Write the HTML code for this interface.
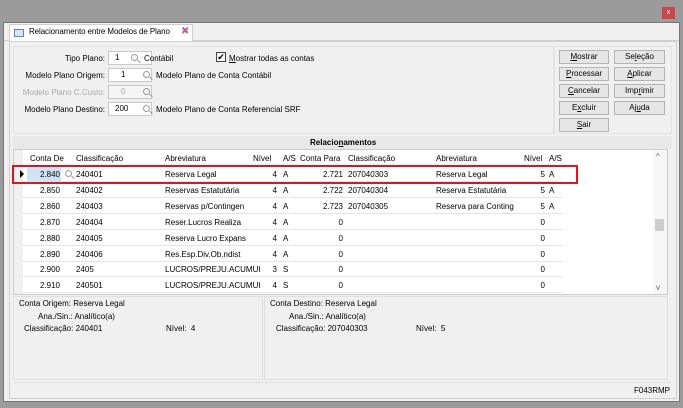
<!DOCTYPE html>
<html><head><meta charset="utf-8"><style>
*{box-sizing:border-box;margin:0;padding:0}
body{width:683px;height:408px;background:#9b9b9b;font-family:"Liberation Sans",sans-serif;font-size:8px;color:#000;position:relative;overflow:hidden}
.a{position:absolute;white-space:nowrap}
.r{text-align:right}
.inp{position:absolute;height:14px;background:#fff;border:1px solid #c8c8c8;font-size:8px;line-height:12px;padding-left:6px}
.mag{position:absolute;width:7px;height:7px;border:1px solid #999;border-radius:50%}
.mag:after{content:"";position:absolute;left:5px;top:6px;width:4px;height:1px;background:#999;transform:rotate(45deg)}
.btn{position:absolute;height:14px;background:#e6e6e6;border:1px solid #b4b4b4;text-align:center;line-height:12px;font-size:8px}
.row{position:absolute;left:23px;width:540px;height:16px;border-bottom:1px solid #e4e4e4}
u{text-decoration:underline}
</style></head><body>
<div class="a" style="left:662px;top:7px;width:13px;height:12px;background:#c9474b;color:#fff;font-size:7px;text-align:center;line-height:12px">x</div>
<div class="a" style="left:3px;top:22px;width:677px;height:380px;background:#f0f0f0;border:1px solid #777"></div>
<div class="a" style="left:4px;top:23px;width:675px;height:18px;background:#f0f0f0;border-bottom:1px solid #cfcfcf"></div>
<div class="a" style="left:9px;top:24px;width:184px;height:18px;background:#fff;border:1px solid #cfcfcf;border-bottom:none"></div>
<div class="a" style="left:14px;top:29px;width:10px;height:8px;border:1px solid #5b86b9;background:#d9e6f4"></div>
<div class="a" style="left:29px;top:27px;font-size:8px;letter-spacing:-0.1px">Relacionamento entre Modelos de Plano</div>
<div class="a" style="left:181px;top:26px;color:#c06090;font-size:10px">✖</div>
<div class="a" style="left:9px;top:41px;width:668px;height:358px;border:1px solid #cfcfcf;background:#f0f0f0"></div>
<div class="a" style="left:13px;top:46px;width:541px;height:88px;border:1px solid #e3e3e3"></div>
<div class="a" style="left:554px;top:46px;width:118px;height:88px;border:1px solid #e3e3e3"></div>
<div class="a r" style="left:20px;top:54px;width:85px">Tipo Plano:</div>
<div class="inp" style="left:108px;top:51px;width:44px">1</div><div class="mag" style="left:131px;top:54px"></div>
<div class="a" style="left:144px;top:54px">Contábil</div>
<div class="a" style="left:216px;top:52px;width:10px;height:10px;border:1px solid #444;background:#fff;font-size:9px;line-height:8px;text-align:center">✔</div>
<div class="a" style="left:229px;top:54px"><u>M</u>ostrar todas as contas</div>
<div class="a r" style="left:10px;top:71px;width:95px">Modelo Plano Origem:</div>
<div class="inp" style="left:108px;top:68px;width:44px;padding-left:12px">1</div><div class="mag" style="left:143px;top:71px"></div>
<div class="a" style="left:156px;top:71px">Modelo Plano de Conta Contábil</div>
<div class="a r" style="left:10px;top:88px;width:95px;color:#aaa">Modelo Plano C.Custo:</div>
<div class="inp" style="left:108px;top:85px;width:44px;padding-left:12px;color:#aaa;background:#f5f5f5">0</div><div class="mag" style="left:143px;top:88px"></div>
<div class="a r" style="left:10px;top:105px;width:95px">Modelo Plano Destino:</div>
<div class="inp" style="left:108px;top:102px;width:44px">200</div><div class="mag" style="left:143px;top:105px"></div>
<div class="a" style="left:156px;top:105px">Modelo Plano de Conta Referencial SRF</div>
<div class="btn" style="left:559px;top:50px;width:50px"><u>M</u>ostrar</div>
<div class="btn" style="left:614px;top:50px;width:51px">Se<u>l</u>eção</div>
<div class="btn" style="left:559px;top:67px;width:50px"><u>P</u>rocessar</div>
<div class="btn" style="left:614px;top:67px;width:51px"><u>A</u>plicar</div>
<div class="btn" style="left:559px;top:84px;width:50px"><u>C</u>ancelar</div>
<div class="btn" style="left:614px;top:84px;width:51px">Imp<u>r</u>imir</div>
<div class="btn" style="left:559px;top:101px;width:50px">E<u>x</u>cluir</div>
<div class="btn" style="left:614px;top:101px;width:51px">Aj<u>u</u>da</div>
<div class="btn" style="left:559px;top:118px;width:50px"><u>S</u>air</div>
<div class="a" style="left:13px;top:136px;width:659px;height:13px;background:#e8e8e8"></div>
<div class="a" style="left:310px;top:138px;font-weight:bold">Relacio<u>n</u>amentos</div>
<div class="a" style="left:13px;top:149px;width:655px;height:146px;background:#fff;border:1px solid #ccc"></div>
<div class="a" style="left:14px;top:150px;width:9px;height:144px;background:#f0f0f0"></div>
<div class="a" style="left:653px;top:150px;width:14px;height:144px;background:#f7f7f7"></div>
<div class="a" style="left:655px;top:219px;width:9px;height:12px;background:#cdcdcd"></div>
<div class="a" style="left:656px;top:152px;font-size:8px;color:#666">^</div>
<div class="a" style="left:656px;top:283px;font-size:8px;color:#666">v</div>
<div class="a" style="left:30px;top:154px">Conta De</div>
<div class="a" style="left:76px;top:154px">Classificação</div>
<div class="a" style="left:165px;top:154px">Abreviatura</div>
<div class="a" style="left:253px;top:154px">Nível</div>
<div class="a" style="left:283px;top:154px">A/S</div>
<div class="a" style="left:300px;top:154px">Conta Para</div>
<div class="a" style="left:348px;top:154px">Classificação</div>
<div class="a" style="left:436px;top:154px">Abreviatura</div>
<div class="a" style="left:524px;top:154px">Nível</div>
<div class="a" style="left:549px;top:154px">A/S</div>
<div class="a" style="left:27px;top:167px;width:34px;height:14px;background:#cfe3f7"></div>
<div class="a" style="left:20px;top:170px;width:0;height:0;border-left:4px solid #000;border-top:4px solid transparent;border-bottom:4px solid transparent"></div>
<div class="mag" style="left:65px;top:170px"></div>
<div id="rows"></div>
<div class="a" style="left:12px;top:165px;width:566px;height:19px;border:2px solid #e0141e"></div>
<div class="a" style="left:13px;top:296px;width:250px;height:84px;border:1px solid #e0e0e0"></div>
<div class="a" style="left:264px;top:296px;width:404px;height:84px;border:1px solid #e0e0e0"></div>
<div class="a" style="left:19px;top:299px">Conta Origem: Reserva Legal</div>
<div class="a" style="left:38px;top:312px">Ana./Sin.: Analítico(a)</div>
<div class="a" style="left:24px;top:324px">Classificação: 240401</div>
<div class="a" style="left:166px;top:324px">Nível:&nbsp; 4</div>
<div class="a" style="left:270px;top:299px">Conta Destino: Reserva Legal</div>
<div class="a" style="left:289px;top:312px">Ana./Sin.: Analítico(a)</div>
<div class="a" style="left:276px;top:324px">Classificação: 207040303</div>
<div class="a" style="left:416px;top:324px">Nível:&nbsp; 5</div>
<div class="a" style="left:13px;top:382px;width:659px;height:14px;border-top:1px solid #e0e0e0"></div>
<div class="a" style="left:634px;top:386px">F043RMP</div>
<script>
var d=[["2.840","240401","Reserva Legal","4","A","2.721","207040303","Reserva Legal","5","A"],
["2.850","240402","Reservas Estatutária","4","A","2.722","207040304","Reserva Estatutária","5","A"],
["2.860","240403","Reservas p/Contingen","4","A","2.723","207040305","Reserva para Conting","5","A"],
["2.870","240404","Reser.Lucros Realiza","4","A","0","","","0",""],
["2.880","240405","Reserva Lucro Expans","4","A","0","","","0",""],
["2.890","240406","Res.Esp.Div.Ob.ndist","4","A","0","","","0",""],
["2.900","2405","LUCROS/PREJU.ACUMUI","3","S","0","","","0",""],
["2.910","240501","LUCROS/PREJU.ACUMUI","4","S","0","","","0",""]];
var h="";d.forEach(function(r,i){var y=167+i*15.9;var t=y+3;
h+='<div class="row" style="top:'+(y-1)+'px"></div>';
h+='<div class="a r" style="left:20px;width:40px;top:'+t+'px">'+r[0]+'</div>';
h+='<div class="a" style="left:76px;top:'+t+'px">'+r[1]+'</div>';
h+='<div class="a" style="left:165px;top:'+t+'px">'+r[2]+'</div>';
h+='<div class="a r" style="left:260px;width:17px;top:'+t+'px">'+r[3]+'</div>';
h+='<div class="a" style="left:283px;top:'+t+'px">'+r[4]+'</div>';
h+='<div class="a r" style="left:300px;width:43px;top:'+t+'px">'+r[5]+'</div>';
h+='<div class="a" style="left:348px;top:'+t+'px">'+r[6]+'</div>';
h+='<div class="a" style="left:436px;top:'+t+'px">'+r[7]+'</div>';
h+='<div class="a r" style="left:530px;width:15px;top:'+t+'px">'+r[8]+'</div>';
h+='<div class="a" style="left:549px;top:'+t+'px">'+r[9]+'</div>';});
document.getElementById("rows").innerHTML=h;
</script>
</body></html>
